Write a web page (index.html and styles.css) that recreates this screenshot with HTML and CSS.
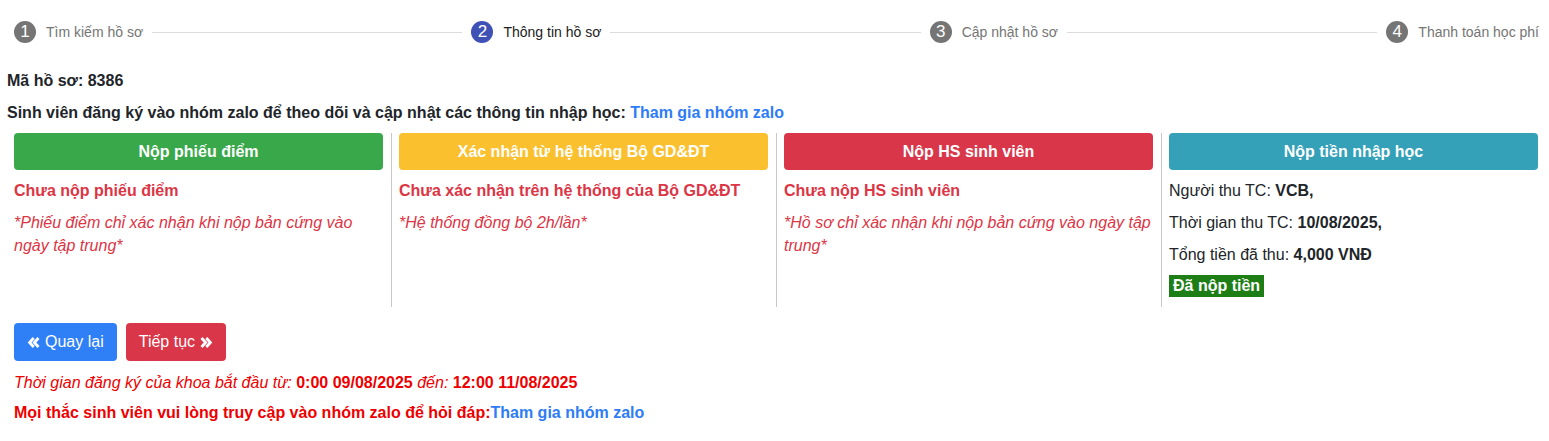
FILE: index.html
```html
<!DOCTYPE html>
<html lang="vi">
<head>
  <meta charset="UTF-8" />
  <title>Thông tin hồ sơ</title>
  <link rel="stylesheet" href="styles.css">
</head>
<body>
<div class="page">

  <div class="stepper">
    <div class="step"><span class="num">1</span><span class="lbl">Tìm kiếm hồ sơ</span></div>
    <div class="line"></div>
    <div class="step active"><span class="num">2</span><span class="lbl">Thông tin hồ sơ</span></div>
    <div class="line"></div>
    <div class="step"><span class="num">3</span><span class="lbl">Cập nhật hồ sơ</span></div>
    <div class="line"></div>
    <div class="step"><span class="num">4</span><span class="lbl">Thanh toán học phí</span></div>
  </div>

  <div class="code">Mã hồ sơ: 8386</div>
  <div class="notice">Sinh viên đăng ký vào nhóm zalo để theo dõi và cập nhật các thông tin nhập học: <a href="#">Tham gia nhóm zalo</a></div>

  <div class="status-row">
    <div class="col">
      <div class="head green">Nộp phiếu điểm</div>
      <p class="bad">Chưa nộp phiếu điểm</p>
      <p class="note">*Phiếu điểm chỉ xác nhận khi nộp bản cứng vào ngày tập trung*</p>
    </div>
    <div class="col">
      <div class="head yellow">Xác nhận từ hệ thống Bộ GD&amp;ĐT</div>
      <p class="bad">Chưa xác nhận trên hệ thống của Bộ GD&amp;ĐT</p>
      <p class="note">*Hệ thống đồng bộ 2h/lần*</p>
    </div>
    <div class="col">
      <div class="head red">Nộp HS sinh viên</div>
      <p class="bad">Chưa nộp HS sinh viên</p>
      <p class="note">*Hồ sơ chỉ xác nhận khi nộp bản cứng vào ngày tập trung*</p>
    </div>
    <div class="col">
      <div class="head teal">Nộp tiền nhập học</div>
      <p>Người thu TC: <b>VCB,</b></p>
      <p>Thời gian thu TC: <b>10/08/2025,</b></p>
      <p>Tổng tiền đã thu: <b>4,000 VNĐ</b></p>
      <span class="badge">Đã nộp tiền</span>
    </div>
  </div>

  <div class="actions">
    <button class="btn btn-blue">
      <svg width="13" height="13" viewBox="0 0 12 12"><path d="M6.2 1.8 L2.4 6 L6.2 10.2 M10.6 1.8 L6.8 6 L10.6 10.2" fill="none" stroke="#fff" stroke-width="2.6"/></svg>
      Quay lại
    </button>
    <button class="btn btn-red">
      Tiếp tục
      <svg width="13" height="13" viewBox="0 0 12 12"><path d="M1.4 1.8 L5.2 6 L1.4 10.2 M5.8 1.8 L9.6 6 L5.8 10.2" fill="none" stroke="#fff" stroke-width="2.6"/></svg>
    </button>
  </div>

  <p class="time"><i>Thời gian đăng ký của khoa bắt đầu từ:</i> <b>0:00 09/08/2025</b> <i>đến:</i> <b>12:00 11/08/2025</b></p>
  <p class="help">Mọi thắc sinh viên vui lòng truy cập vào nhóm zalo để hỏi đáp:<a href="#">Tham gia nhóm zalo</a></p>

</div>
</body>
</html>
```

FILE: styles.css
```css
body {
  margin: 0;
  font-family: "Liberation Sans", Arial, sans-serif;
  font-size: 16px;
  color: #212529;
  background: #fff;
}
a {
  color: #2e7cf6;
  text-decoration: none;
}
.page {
  padding: 21px 2px 0 6px;
}

/* stepper */
.stepper {
  display: flex;
  align-items: center;
  padding: 0 8px;
}
.step {
  display: flex;
  align-items: center;
}
.num {
  width: 22px;
  height: 22px;
  border-radius: 50%;
  background: #757575;
  color: #fff;
  font-size: 17px;
  line-height: 22px;
  text-align: center;
  margin-right: 10px;
}
.lbl {
  font-size: 14px;
  color: #757575;
}
.step.active .num {
  background: #3f51b5;
}
.step.active .lbl {
  color: #212121;
}
.line {
  flex: 1;
  height: 1px;
  background: #ddd;
  margin: 0 9px;
}

.code {
  font-weight: bold;
  line-height: 23px;
  margin-top: 26px;
  padding-left: 1px;
}
.notice {
  font-weight: bold;
  line-height: 23px;
  margin-top: 9px;
  padding-left: 1px;
}

/* status columns */
.status-row {
  display: grid;
  grid-template-columns: repeat(4, 385px);
  margin-top: 9px;
}
.col {
  padding: 0 8px 10px 7px;
  border-left: 1px solid #c8c8c8;
}
.col:first-child {
  border-left: none;
  padding-left: 8px;
}
.col p {
  margin: 0 0 9px;
  line-height: 23px;
}
.head {
  color: #fff;
  font-weight: bold;
  text-align: center;
  padding: 8px;
  line-height: 21px;
  border-radius: 4px;
  margin-bottom: 9px;
}
.green { background: #39a84a; }
.yellow { background: #fbc02d; }
.red { background: #d9364a; }
.teal { background: #34a1b9; }
.bad {
  color: #dc3545;
  font-weight: bold;
}
.note {
  color: #dc3545;
  font-style: italic;
}
.badge {
  display: inline-block;
  background: #1e7e16;
  color: #fff;
  font-weight: bold;
  line-height: 22px;
  padding: 0 4px;
}

/* buttons */
.actions {
  display: flex;
  gap: 9px;
  margin-top: 16px;
  padding-left: 8px;
}
.btn {
  font-family: inherit;
  font-size: 16px;
  line-height: 24px;
  color: #fff;
  border: none;
  border-radius: 4px;
  padding: 7px 13px;
  display: flex;
  align-items: center;
  gap: 5px;
}
.btn-blue { background: #2f80f7; }
.btn-red { background: #d9364a; }

.time, .help {
  margin: 10px 0 0;
  padding-left: 8px;
  line-height: 23px;
  color: #e00;
}
.help {
  margin-top: 7px;
  font-weight: bold;
}
```
